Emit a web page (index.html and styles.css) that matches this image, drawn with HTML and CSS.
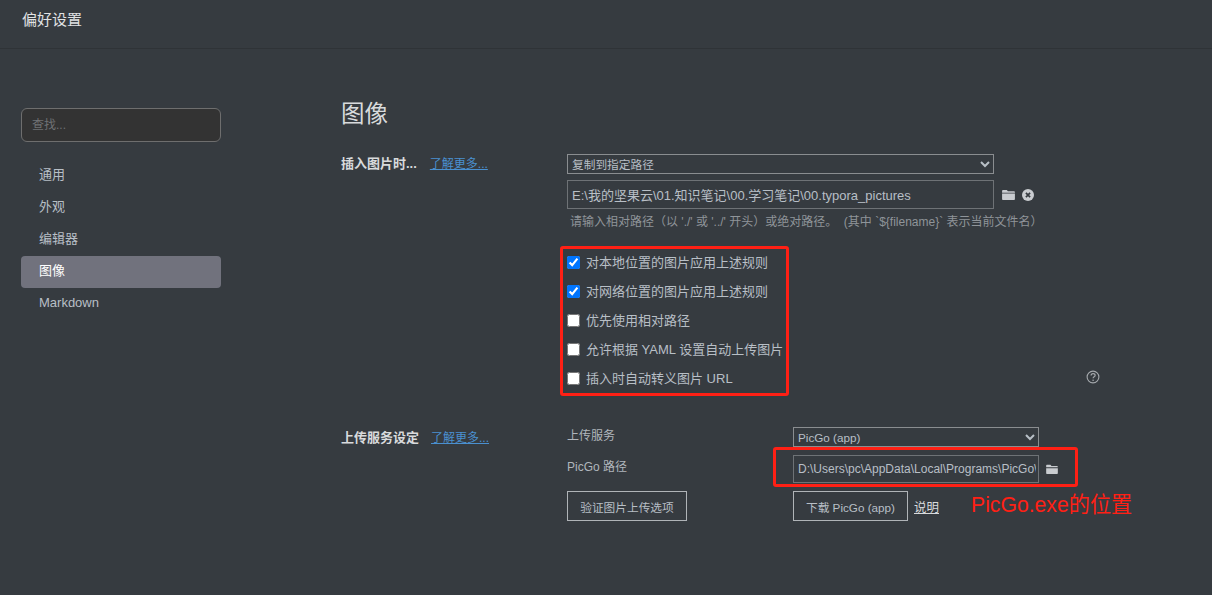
FILE: index.html
```html
<!DOCTYPE html>
<html lang="zh-CN">
<head>
<meta charset="utf-8">
<title>偏好设置</title>
<link rel="stylesheet" href="styles.css">
</head>
<body>
<svg class="defs" width="0" height="0" aria-hidden="true">
  <symbol id="folder" viewBox="0 0 14 12"><path d="M1.200 1h3.900l1.300 1.500h6.400c.6 0 1.200.5 1.200 1.100V4H0V2.200C0 1.500.5 1 1.200 1zM0 5h14v5.800c0 .7-.5 1.200-1.200 1.200H1.200C.5 12 0 11.500 0 10.800z"/></symbol>
</svg>
<header class="titlebar"><h2 class="titlebar-text">偏好设置</h2></header>
<div class="page">
  <aside class="sidebar">
    <input class="search" type="text" placeholder="查找...">
    <nav class="nav">
      <a class="nav-item">通用</a>
      <a class="nav-item">外观</a>
      <a class="nav-item">编辑器</a>
      <a class="nav-item active">图像</a>
      <a class="nav-item">Markdown</a>
    </nav>
  </aside>
  <main class="main">
    <h1 class="heading">图像</h1>

    <section class="section insert">
      <div class="label-col">
        <strong class="label">插入图片时...</strong>
        <a class="more more-a">了解更多...</a>
      </div>
      <div class="field-col">
        <select class="select wide"><option>复制到指定路径</option></select>
        <div class="path-row">
          <input class="text wide" type="text" value="E:\我的坚果云\01.知识笔记\00.学习笔记\00.typora_pictures">
          <svg class="icon folder"><use href="#folder"/></svg>
          <svg class="icon clear" viewBox="0 0 12 12"><circle cx="6" cy="6" r="6" fill="#c9ccd0"/><path d="M3.900 3.900l4.200 4.200M8.100 3.900l-4.200 4.200" stroke="#363b40" stroke-width="1.700"/></svg>
        </div>
        <p class="hint">请输入相对路径（以 './' 或 '../' 开头）或绝对路径。 &nbsp;(其中 `${filename}` 表示当前文件名）</p>
        <div class="checks-row">
          <div class="checks">
            <label class="check"><input type="checkbox" checked>对本地位置的图片应用上述规则</label>
            <label class="check"><input type="checkbox" checked>对网络位置的图片应用上述规则</label>
            <label class="check"><input type="checkbox">优先使用相对路径</label>
            <label class="check"><input type="checkbox">允许根据 YAML 设置自动上传图片</label>
            <label class="check"><input type="checkbox">插入时自动转义图片 URL</label>
            <span class="mark mark-checks"></span>
          </div>
          <svg class="help" viewBox="0 0 14 14"><circle cx="7" cy="7" r="5.900" fill="none" stroke="#a5a9ad" stroke-width="1.100"/><path d="M5.100 5.600c0-1.200.9-1.900 2-1.900s2 .7 2 1.700c0 1.500-2 1.400-2 2.900" fill="none" stroke="#a5a9ad" stroke-width="1.200"/><circle cx="7.100" cy="10.200" r=".8" fill="#a5a9ad"/></svg>
        </div>
      </div>
    </section>

    <section class="section upload">
      <div class="label-col">
        <strong class="label">上传服务设定</strong>
        <a class="more more-b">了解更多...</a>
      </div>
      <div class="upload-grid">
        <span class="sub-label sub-first">上传服务</span>
        <select class="select narrow"><option>PicGo (app)</option></select>
        <span class="sub-label sub-second">PicGo 路径</span>
        <div class="picgo-path">
          <input class="text narrow picgo-input" type="text" value="D:\Users\pc\AppData\Local\Programs\PicGo\PicGo.exe">
          <svg class="icon folder folder-small"><use href="#folder"/></svg>
          <span class="mark mark-path"></span>
        </div>
        <div class="btn-cell"><button class="btn btn-verify">验证图片上传选项</button></div>
        <div class="btn-cell download">
          <button class="btn btn-download">下载 PicGo (app)</button>
          <a class="explain">说明</a>
          <span class="note">PicGo.exe的位置</span>
        </div>
      </div>
    </section>
  </main>
</div>
</body>
</html>
```
FILE: styles.css
```css
* { box-sizing: border-box; }
html, body { margin: 0; height: 100%; overflow: hidden; }
body {
  background: #363b40;
  color: #b8bfc6;
  font-family: "Liberation Sans", "Noto Sans CJK SC", sans-serif;
  font-size: 13px;
}
.defs { position: absolute; }

.titlebar { height: 49px; border-bottom: 1px solid #2f3337; padding: 11px 0 0 22px; }
.titlebar-text { margin: 0; font-size: 15px; font-weight: 400; line-height: 18px; color: #e0e2e4; }

.page { display: flex; }
.sidebar { width: 341px; flex: none; padding: 59px 120px 0 21px; }
.search {
  display: block; width: 200px; height: 34px; padding: 0 10px;
  background: #333333; border: 1px solid #6e6e6e; border-radius: 6px;
  font: inherit; font-size: 12px; color: #ccc; outline: none;
}
.search::placeholder { color: #6f7174; }
.nav { margin-top: 18px; display: flex; flex-direction: column; }
.nav-item { display: block; height: 32px; line-height: 30px; padding-left: 18px; border-radius: 4px; color: #b8bfc6; }
.nav-item.active { background: #71727d; color: #fff; }

.main { flex: 1; min-width: 0; }
.heading { margin: 0; padding-top: 49px; height: 105px; font-size: 23.500px; line-height: 32px; font-weight: 400; color: #d8dadc; }

.section { display: flex; }
.label-col { width: 226px; flex: none; display: flex; align-items: baseline; }
.label { font-weight: 700; color: #d8dadc; }
.more { color: #4a90d0; text-decoration: underline; font-size: 12px; }
.more-a { margin-left: 13px; }
.more-b { margin-left: 12px; }
.insert .label-col { line-height: 19px; }

.select, .text {
  display: block; background: transparent; border: 1px solid #8a8d90; border-radius: 0;
  color: #b8bfc6; font: inherit; outline: none;
}
.select { height: 20px; padding: 1px 0 0; font-size: 11.700px; }
.select.narrow { padding: 0; }
.select option { background: #363b40; }
.wide { width: 427px; }
.narrow { width: 246px; }
.text { height: 29px; padding: 0 4px; font-size: 13px; border-color: #6e7276; }

.path-row { display: flex; align-items: center; margin-top: 6px; }
.icon { flex: none; }
.folder { width: 13px; height: 11px; fill: #c9ccd0; margin-left: 8px; }
.folder-small { width: 12px; height: 10px; margin-left: 7px; }
.clear { width: 12px; height: 12px; margin-left: 7px; }
.hint { margin: 5px 0 0; font-size: 12px; line-height: 17px; padding-left: 3px; color: #8f9499; white-space: nowrap; }

.checks-row { display: flex; align-items: flex-end; justify-content: space-between; width: 533px; margin-top: 20px; }
.checks { position: relative; display: flex; flex-direction: column; gap: 9px; }
.check { display: flex; align-items: center; height: 20px; white-space: nowrap; color: #b8bfc6; }
.check input { width: 13px; height: 13px; margin: 2px 6px 0 0; accent-color: #0075ff; }
.help { width: 14px; height: 14px; margin-bottom: 3px; }

.mark { position: absolute; border: 3px solid #ff2015; border-radius: 3px; pointer-events: none; }
.mark-checks { left: -7px; right: -6px; top: -5px; bottom: -9px; }

.upload { margin-top: 40px; }
.upload .label-col { padding-top: 1px; line-height: 20px; }
.upload-grid { display: grid; grid-template-columns: 226px auto; grid-template-rows: 20px 28px 30px; row-gap: 8px; }
.sub-label { font-size: 12px; color: #b0b6bc; }
.sub-first { line-height: 18px; }
.sub-second { line-height: 24px; }
.picgo-path { position: relative; display: flex; align-items: center; }
.picgo-input { height: 28px; font-size: 12px; padding: 0 2px 0 4px; color: #b8bfc6; }
.mark-path { left: -20px; top: -8px; width: 305px; height: 40px; }
.btn {
  height: 30px; background: transparent; border: 1px solid #b0b4b8; border-radius: 0;
  color: #b8bfc6; font: inherit; font-size: 11.700px; padding: 0;
}
.btn-verify { width: 120px; }
.btn-download { width: 115px; }
.download { position: relative; display: flex; align-items: center; }
.explain { margin-left: 6px; color: #d8dadc; text-decoration: underline; font-size: 12.500px; }
.note { position: absolute; left: 178px; top: -1px; line-height: 30px; font-size: 21.200px; color: #ff2015; white-space: nowrap; }
```
